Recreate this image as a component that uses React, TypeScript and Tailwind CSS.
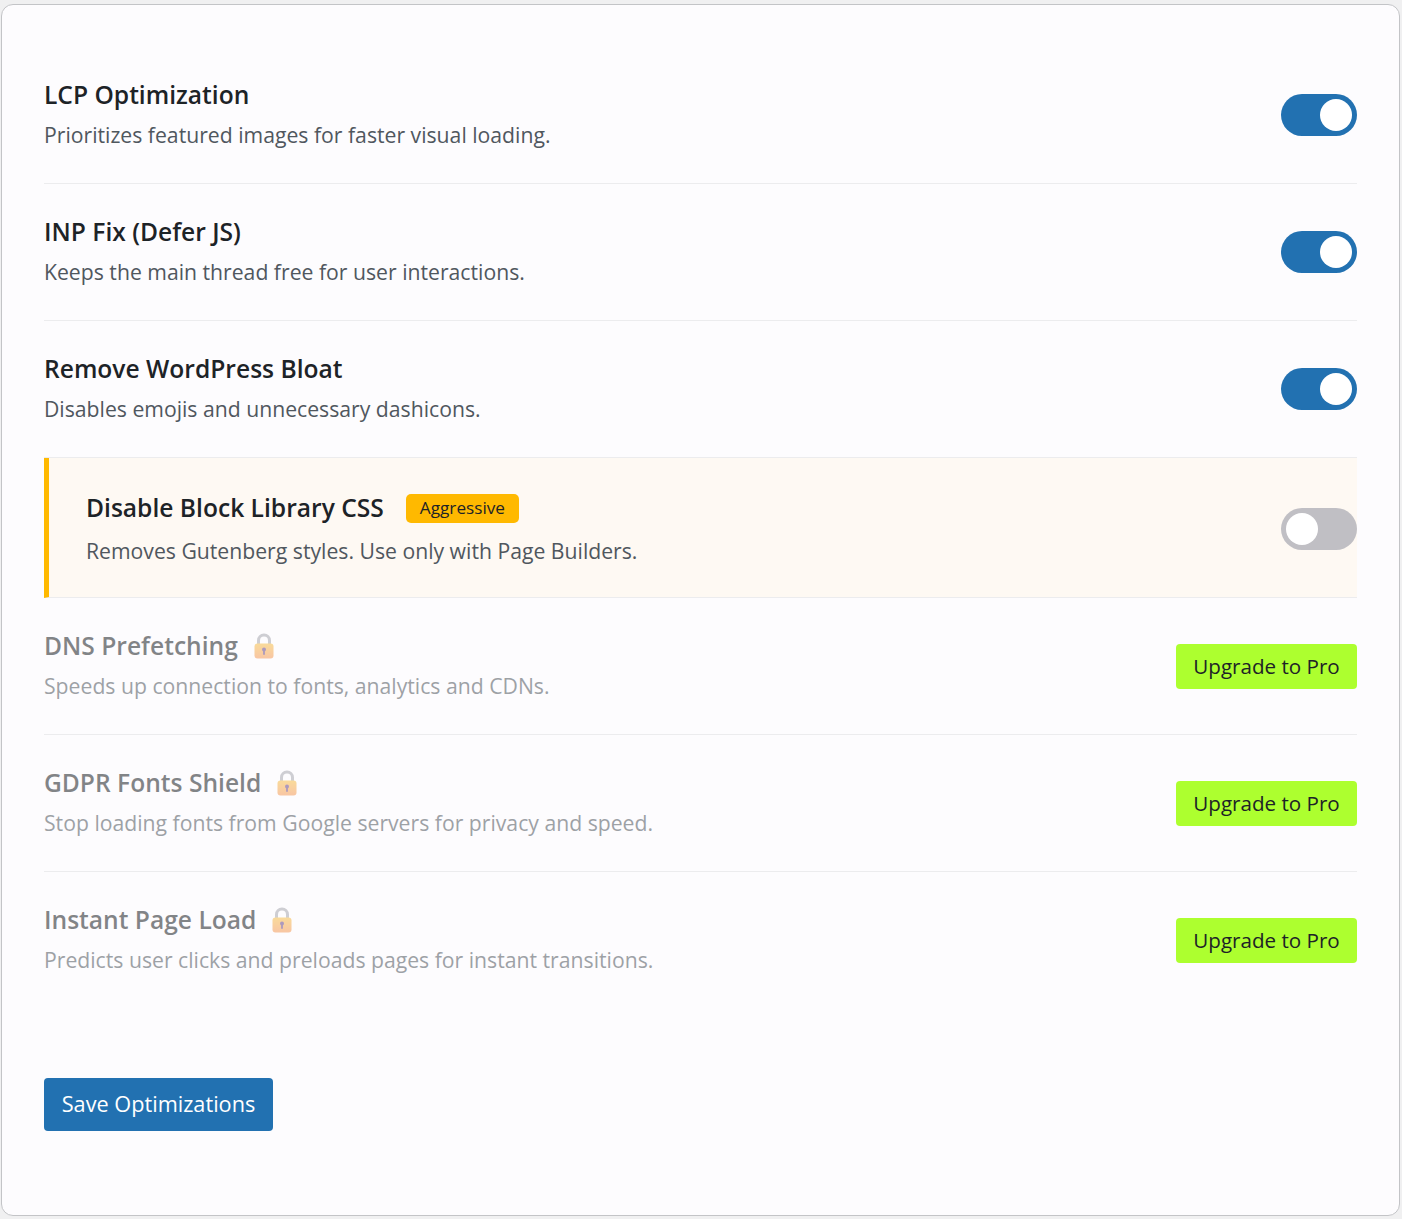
import React from "react";

function Toggle({ on }: { on: boolean }) {
  return on ? (
    <div className="flex h-[42px] w-[76px] shrink-0 items-center justify-end rounded-full bg-[#2271b1] pr-[5px]">
      <div className="h-[32px] w-[32px] rounded-full bg-white" />
    </div>
  ) : (
    <div className="flex h-[42px] w-[76px] shrink-0 items-center justify-start rounded-full bg-[#c0bfc4] pl-[5px]">
      <div className="h-[32px] w-[32px] rounded-full bg-white" />
    </div>
  );
}

function Lock() {
  return (
    <svg width="24" height="28" viewBox="0 0 24 28" className="shrink-0">
      <defs>
        <linearGradient id="lockBody" x1="0" y1="0" x2="0" y2="1">
          <stop offset="0" stopColor="#f7c04a" />
          <stop offset="1" stopColor="#f59a5a" />
        </linearGradient>
      </defs>
      <path d="M6.5 12 V8.5 A5.5 5.5 0 0 1 17.5 8.5 V12" fill="none" stroke="#a9a9b1" strokeWidth="3" />
      <rect x="2.5" y="11.5" width="19" height="15" rx="3" fill="url(#lockBody)" />
      <circle cx="12" cy="17.5" r="2" fill="#6b4a8a" />
      <rect x="11.1" y="18" width="1.8" height="5" rx="0.9" fill="#6b4a8a" />
    </svg>
  );
}

function Row({ title, desc, on }: { title: string; desc: string; on: boolean }) {
  return (
    <div className="flex items-center justify-between border-b border-[#ececee] pt-[30px] pb-[30px]">
      <div>
        <div className="text-[24.6px] font-semibold leading-[36px] text-[#1d2327]">{title}</div>
        <div className="mt-[4px] text-[21.2px] leading-[36px] text-[#50575e]">{desc}</div>
      </div>
      <Toggle on={on} />
    </div>
  );
}

function ProRow({ title, desc, last }: { title: string; desc: string; last?: boolean }) {
  return (
    <div
      className={
        last
          ? "flex items-center justify-between pt-[30px] pb-[30px]"
          : "flex items-center justify-between border-b border-[#ececee] pt-[30px] pb-[30px]"
      }
    >
      <div className="opacity-55">
        <div className="flex items-center gap-[14px] text-[24.6px] font-semibold leading-[36px] text-[#1d2327]">
          <span>{title}</span>
          <Lock />
        </div>
        <div className="mt-[4px] text-[21.2px] leading-[36px] text-[#50575e]">{desc}</div>
      </div>
      <button className="flex h-[45px] w-[181px] items-center justify-center rounded-[4px] bg-[#adff2f] text-[20.6px] font-medium text-[#1d2327]">
        Upgrade to Pro
      </button>
    </div>
  );
}

export default function App() {
  return (
    <div
      className="min-h-[1219px] bg-[#f0f0f1] pt-[4px] pl-[1px] pr-[2px] pb-[3px]"
      style={{ fontFamily: '"Open Sans", "Noto Sans", sans-serif' }}
    >
      <div className="rounded-[12px] border border-[#c3c4c7] bg-[#fdfcfe] px-[42px] pt-[42px] pb-[84px]">
        <Row title="LCP Optimization" desc="Prioritizes featured images for faster visual loading." on />
        <Row title="INP Fix (Defer JS)" desc="Keeps the main thread free for user interactions." on />
        <Row title="Remove WordPress Bloat" desc="Disables emojis and unnecessary dashicons." on />

        <div className="flex items-center justify-between border-b border-l-[5px] border-b-[#ececee] border-l-[#ffb900] bg-[#fef9f3] pt-[30px] pb-[28px] pl-[37px]">
          <div>
            <div className="flex h-[40px] items-center gap-[22px]">
              <span className="text-[24.6px] font-semibold text-[#1d2327]">Disable Block Library CSS</span>
              <span className="flex h-[29px] items-center rounded-[5px] bg-[#ffb900] px-[14px] text-[17.2px] font-medium text-[#1d2327]">
                Aggressive
              </span>
            </div>
            <div className="mt-[5px] text-[21.2px] leading-[36px] text-[#50575e]">
              Removes Gutenberg styles. Use only with Page Builders.
            </div>
          </div>
          <Toggle on={false} />
        </div>

        <ProRow title="DNS Prefetching" desc="Speeds up connection to fonts, analytics and CDNs." />
        <ProRow title="GDPR Fonts Shield" desc="Stop loading fonts from Google servers for privacy and speed." />
        <ProRow title="Instant Page Load" desc="Predicts user clicks and preloads pages for instant transitions." last />

        <div className="mt-[70px]">
          <button className="flex h-[53px] w-[229px] items-center justify-center rounded-[4px] bg-[#2271b1] text-[21.7px] text-white">
            Save Optimizations
          </button>
        </div>
      </div>
    </div>
  );
}
